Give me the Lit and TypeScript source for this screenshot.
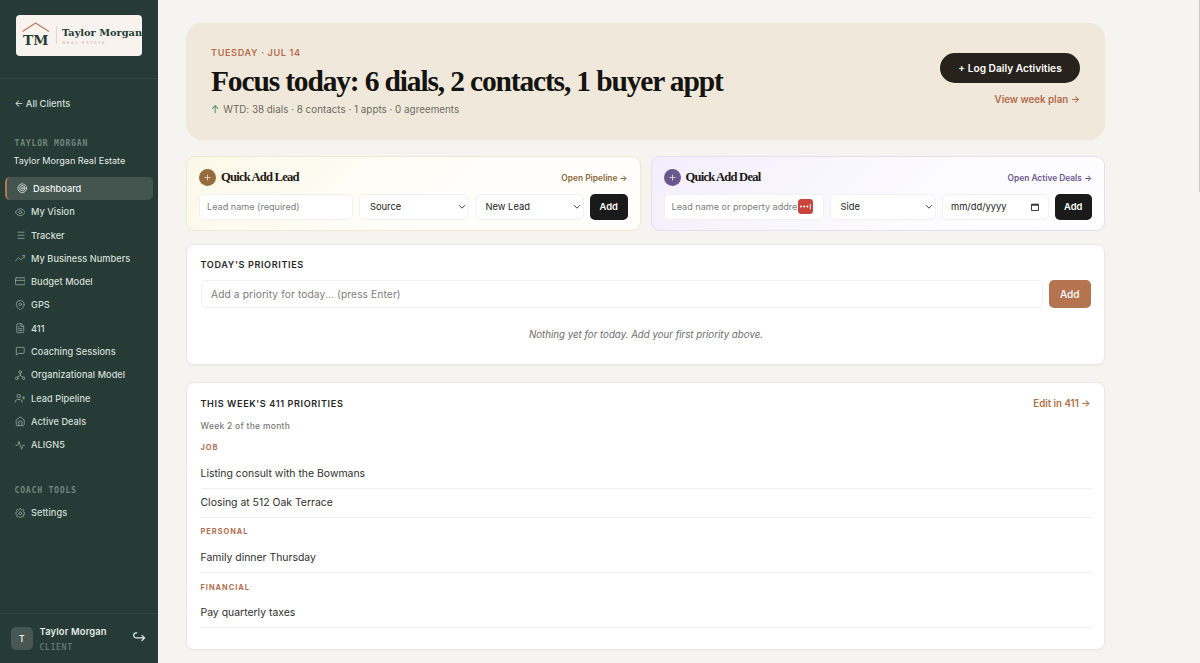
import { LitElement, html, css, svg } from "lit";
import { customElement, property } from "lit/decorators.js";

const icons: Record<string, unknown> = {
  target: svg`<circle cx="12" cy="12" r="10"/><circle cx="12" cy="12" r="6"/><circle cx="12" cy="12" r="2"/>`,
  eye: svg`<path d="M1 12s4-8 11-8 11 8 11 8-4 8-11 8S1 12 1 12z"/><circle cx="12" cy="12" r="3.4"/>`,
  list: svg`<path d="M7 5h14M7 12h14M7 19h14"/>`,
  trend: svg`<path d="M23 6l-9.5 9.5-5-5L1 18"/><path d="M17 6h6v6"/>`,
  card: svg`<rect x="1" y="4" width="22" height="16" rx="2"/><path d="M1 10h22"/>`,
  pin: svg`<path d="M21 10c0 7-9 13-9 13s-9-6-9-13a9 9 0 0 1 18 0z"/><circle cx="12" cy="10" r="3"/>`,
  file: svg`<path d="M14 2H6a2 2 0 0 0-2 2v16a2 2 0 0 0 2 2h12a2 2 0 0 0 2-2V8z"/><path d="M14 2v6h6M16 13H8M16 17H8M10 9H8"/>`,
  chat: svg`<path d="M21 15a2 2 0 0 1-2 2H7l-4 4V5a2 2 0 0 1 2-2h14a2 2 0 0 1 2 2z"/>`,
  org: svg`<circle cx="12" cy="4.500" r="3"/><circle cx="4" cy="19" r="3"/><circle cx="20" cy="19" r="3"/><path d="M12 7.500v5M12 12.500l-6.500 4M12 12.500l6.500 4"/>`,
  userplus: svg`<path d="M16 21v-2a4 4 0 0 0-4-4H5a4 4 0 0 0-4 4v2"/><circle cx="8.500" cy="7" r="4"/><path d="M20 8v6M23 11h-6"/>`,
  home: svg`<path d="M3 9l9-7 9 7v11a2 2 0 0 1-2 2H5a2 2 0 0 1-2-2z"/><path d="M8.500 22V12h7v10"/>`,
  pulse: svg`<path d="M22 12h-4l-3 9L9 3l-3 9H2"/>`,
  gear: svg`<circle cx="12" cy="12" r="3.200"/><path d="M19.400 15a1.650 1.650 0 0 0 .33 1.820l.06.06a2 2 0 1 1-2.830 2.830l-.06-.06a1.650 1.650 0 0 0-2.800 1.170V21a2 2 0 0 1-4 0v-.09a1.650 1.650 0 0 0-2.900-1.090l-.06.06a2 2 0 1 1-2.830-2.830l.06-.06A1.650 1.650 0 0 0 3.090 14H3a2 2 0 0 1 0-4h.09a1.650 1.650 0 0 0 1.100-2.900l-.06-.06a2 2 0 1 1 2.830-2.830l.06.06A1.650 1.650 0 0 0 10 3.090V3a2 2 0 0 1 4 0v.09a1.650 1.650 0 0 0 2.900 1.090l.06-.06a2 2 0 1 1 2.830 2.830l-.06.06A1.650 1.650 0 0 0 20.910 10H21a2 2 0 0 1 0 4h-.09a1.650 1.650 0 0 0-1.510 1z"/>`,
};

@customElement("line-icon")
class LineIcon extends LitElement {
  @property() name = "";
  static styles = css`
    :host { display: block; width: 10.500px; height: 10.500px; flex: none; }
    svg { display: block; width: 100%; height: 100%; fill: none; stroke: currentColor; stroke-width: 1.900; stroke-linecap: round; stroke-linejoin: round; }
  `;
  render() {
    return html`<svg viewBox="0 0 24 24">${icons[this.name]}</svg>`;
  }
}

@customElement("side-bar")
class SideBar extends LitElement {
  static styles = css`
    :host { display: flex; flex-direction: column; width: 158px; height: 663px; background: #263b35; color: #d3dfd8; font-family: Inter, sans-serif; flex: none; box-sizing: border-box; }
    .brand { height: 79px; box-sizing: border-box; padding: 15px 0 0 16px; border-bottom: 1px solid #34483f; flex: none; }
    .logo { display: block; width: 125.500px; height: 41px; border-radius: 4px; background: #f8f3ee; overflow: hidden; }
    .logo svg { display: block; width: 126px; height: 41px; }
    .back { padding: 17px 0 0 14.500px; font-size: 9.300px; line-height: 15px; font-weight: 500; }
    .label { font: 700 8.200px/12px "DejaVu Sans Mono", monospace; letter-spacing: .73px; color: #71857d; padding-left: 14.500px; white-space: nowrap; }
    .client { margin-top: 26px; }
    .company { padding: 5px 0 0 13.500px; font-size: 9.070px; line-height: 14px; white-space: nowrap; color: #e3ebe6; }
    .nav { display: flex; flex-direction: column; gap: .3px; margin-top: 9px; padding: 0 5px; }
    .item { display: flex; align-items: center; gap: 6px; height: 23px; padding-left: 9.500px; font-size: 9.200px; font-weight: 500; white-space: nowrap; letter-spacing: .04px; border-radius: 5px; width: 148px; box-sizing: border-box; }
    .item line-icon { color: #93a69e; }
    .item.active { background: #43544e; border-left: 2px solid #b07650; color: #eef3f0; }
    .item.active line-icon { color: #dce5e0; }
    .tools { margin-top: 27.500px; }
    .tools + .nav { margin-top: 5.500px; }
    .user { margin-top: auto; height: 50px; border-top: 1px solid #32463f; display: flex; align-items: center; padding-left: 10.500px; box-sizing: border-box; }
    .avatar { width: 22.500px; height: 22.500px; border-radius: 5px; background: #465851; display: grid; place-items: center; font-size: 8.500px; font-weight: 600; color: #e8efeb; }
    .who { margin-left: 6.500px; width: 93px; }
    .name { font-size: 9.350px; line-height: 14px; font-weight: 600; color: #e3ebe6; letter-spacing: .16px; }
    .role { font: 400 8.200px/12px "DejaVu Sans Mono", monospace; letter-spacing: .6px; color: #71857d; margin-top: 2px; }
    .out { width: 13px; height: 12px; margin-bottom: 3px; fill: none; stroke: #e3ebe6; stroke-width: 1.300; stroke-linecap: round; stroke-linejoin: round; }
  `;
  nav: [string, string][] = [
    ["target", "Dashboard"], ["eye", "My Vision"], ["list", "Tracker"], ["trend", "My Business Numbers"],
    ["card", "Budget Model"], ["pin", "GPS"], ["file", "411"], ["chat", "Coaching Sessions"],
    ["org", "Organizational Model"], ["userplus", "Lead Pipeline"], ["home", "Active Deals"], ["pulse", "ALIGN5"],
  ];
  render() {
    return html`
      <div class="brand">
        <div class="logo"><svg viewBox="0 0 126 41">
          <path d="M6.500 16.500L19.500 8L33 16.500" fill="none" stroke="#c07a5c" stroke-width="1.300"/>
          <text x="7" y="30" font-family="DejaVu Serif" font-weight="700" font-size="13.500" textLength="25.500" lengthAdjust="spacingAndGlyphs" fill="#263b35">TM</text>
          <path d="M40.500 11v18" stroke="#d9d0c8" stroke-width=".8"/>
          <text x="46" y="21" font-family="DejaVu Serif" font-weight="700" font-size="10" textLength="80" lengthAdjust="spacingAndGlyphs" fill="#263b35">Taylor Morgan</text>
          <text x="46.500" y="28.700" font-family="DejaVu Sans" font-size="3.900" textLength="42" fill="#cfa594">REAL ESTATE</text>
        </svg></div>
      </div>
      <div class="back">← All Clients</div>
      <div class="label client">TAYLOR MORGAN</div>
      <div class="company">Taylor Morgan Real Estate</div>
      <div class="nav">
        ${this.nav.map(([i, t], n) => html`<div class="item ${n === 0 ? "active" : ""}"><line-icon name=${i}></line-icon>${t}</div>`)}
      </div>
      <div class="label tools">COACH TOOLS</div>
      <div class="nav"><div class="item"><line-icon name="gear"></line-icon>Settings</div></div>
      <div class="user">
        <div class="avatar">T</div>
        <div class="who"><div class="name">Taylor Morgan</div><div class="role">CLIENT</div></div>
        <svg class="out" viewBox="0 0 14 12"><path d="M4 1.500H3.500a2.700 2.700 0 0 0 0 5.500H12.500M9.700 4.200L12.500 7L9.700 9.800"/></svg>
      </div>`;
  }
}

@customElement("app-root")
class AppRoot extends LitElement {
  static styles = css`
    :host { display: flex; position: relative; width: 1200px; height: 663px; overflow: hidden; background: #f5f4f0; font-family: Inter, sans-serif; color: #2e2e2e; }
    * { box-sizing: border-box; }
    .main { width: 919px; margin-left: 28px; padding-top: 22.500px; white-space: nowrap; }
    .hero { height: 117px; border-radius: 16px; background: #f0e9db; padding: 22px 25px 0; display: flex; justify-content: space-between; }
    .eyebrow { font-size: 9.100px; line-height: 14px; font-weight: 600; letter-spacing: .64px; color: #b9694e; padding-top: 1px; }
    .title { margin: 2.500px 0 0; font: 700 29.500px/38px "Liberation Serif", serif; letter-spacing: -1.160px; color: #14130f; }
    .wtd { margin-top: 2px; font-size: 9.800px; line-height: 15px; color: #6d6a61; letter-spacing: .02px; }
    .up { color: #3e7a58; margin-right: 4px; }
    .side { display: flex; flex-direction: column; align-items: flex-end; padding-top: 8.500px; }
    .pill { width: 140px; height: 30px; border-radius: 15px; border: 0; background: #28221c; color: #fff; font: 600 10.200px Inter, sans-serif; padding: 0 0 1px; }
    .plan { margin-top: 8.500px; font-size: 9.750px; line-height: 15px; font-weight: 600; color: #b5694b; }
    .quick { display: grid; grid-template-columns: minmax(0, 1fr) minmax(0, 1fr); gap: 10px; margin-top: 16.500px; }
    .qa { height: 75px; border: 1px solid #f0e9d2; border-radius: 9px; padding: 12px 12px 0; background: linear-gradient(135deg, #fcf8e8, #fffefb 60%, #fffefa); }
    .qa.deal { border-color: #e3dfef; background: linear-gradient(135deg, #f2eefc, #fcfbff 60%, #fefdff); }
    .qhead { display: flex; align-items: center; height: 17px; }
    .plus { width: 17px; height: 17px; border-radius: 50%; background: #966c3c; display: grid; place-items: center; }
    .plus svg { width: 7px; height: 7px; stroke: #f0e6d8; stroke-width: .8; }
    .deal .plus { background: #68588f; }
    .qtitle { font: 700 12.600px/17px "Liberation Serif", serif; letter-spacing: -.8px; margin-left: 5px; color: #1c1915; }
    .open { margin-left: auto; font-size: 8.400px; font-weight: 600; color: #8a6a3e; }
    .deal .open { color: #68588f; }
    .row { display: flex; gap: 6px; margin-top: 7.500px; }
    .field { height: 26px; border: 1px solid #f2f1ee; border-radius: 5px; background: #fff; font: 400 9.350px Inter, sans-serif; color: #222; padding: 0 7px; display: flex; align-items: center; min-width: 0; outline: 0; margin: 0; flex: none; }
    input.field { font-size: 9.100px; }
    .field::placeholder { color: #7d7d7d; opacity: 1; }
    .sel { justify-content: space-between; padding: 0 2px 0 10px; }
    .sel svg { width: 8px; height: 6px; fill: none; stroke: #333; stroke-width: .95; }
    .sel.date { padding: 0 9px 0 8px; }
    .sel .cal { width: 8px; height: 8px; }
    .wrap { position: relative; display: flex; }
    .badge { position: absolute; left: 134.500px; top: 5.500px; width: 15px; height: 15px; border-radius: 3px; }
    .add { height: 26px; width: 37.500px; border: 0; border-radius: 5px; background: #1a1a1a; color: #fff; font: 600 9.350px Inter, sans-serif; padding: 0; flex: none; }
    .w1 { width: 154px; } .w2 { width: 109.500px; } .w3 { width: 160px; } .w4 { width: 106.500px; }
    .card { background: #fff; border: 1px solid #eae9e5; border-radius: 8px; box-shadow: 0 1px 2px rgba(40, 40, 30, .04); padding: 13px 12.500px 0 13.500px; }
    .today { margin-top: 12.500px; height: 121.500px; }
    .week { margin-top: 16.500px; height: 268px; padding-top: 14px; }
    .h { font-size: 9.100px; line-height: 14px; font-weight: 600; letter-spacing: .62px; color: #262626; }
    .prow { display: flex; gap: 6px; margin-top: 8.500px; padding-right: 1px; }
    input.pinput { flex: 1; height: 28px; font-size: 10.200px; padding: 0 9.500px; letter-spacing: .12px; }
    .padd { width: 41.500px; height: 28px; border: 0; border-radius: 5px; background: #b3744f; color: #fff; font: 500 10.200px Inter, sans-serif; padding: 0; }
    .empty { text-align: center; margin-top: 19px; font-size: 9.700px; line-height: 15px; font-style: italic; color: #6b6b6b; }
    .whead { display: flex; justify-content: space-between; padding-right: 1px; }
    .edit { font-size: 9.700px; line-height: 14px; font-weight: 600; color: #b07048; }
    .sub { margin-top: 9.700px; font-size: 8.500px; line-height: 13px; font-weight: 500; color: #777; letter-spacing: .28px; }
    .cat { margin-top: 8.700px; font-size: 7.400px; line-height: 11px; font-weight: 700; letter-spacing: 1px; color: #b07050; }
    .task { height: 29px; line-height: 28px; font-size: 10.430px; color: #303030; border-bottom: 1px solid #efefed; }
    .first { margin-top: 6.700px; }
    .thumb { position: absolute; right: 0; top: 0; width: 1px; height: 192px; background: #c9c9c6; }
  `;
  chevron = html`<svg viewBox="0 0 8 6"><path d="M1 1.200L4 4.200L7 1.200"/></svg>`;
  plus = html`<span class="plus"><svg viewBox="0 0 7 7"><path d="M3.500 .5v6M.5 3.500h6"/></svg></span>`;
  group(name: string, tasks: string[]) {
    return html`<div class="cat">${name}</div>${tasks.map((t, i) => html`<div class="task ${i ? "" : "first"}">${t}</div>`)}`;
  }
  render() {
    return html`
      <side-bar></side-bar>
      <div class="main">
        <div class="hero">
          <div>
            <div class="eyebrow">TUESDAY · JUL 14</div>
            <h1 class="title">Focus today: 6 dials, 2 contacts, 1 buyer appt</h1>
            <div class="wtd"><span class="up">↑</span>WTD: 38 dials · 8 contacts · 1 appts · 0 agreements</div>
          </div>
          <div class="side"><button class="pill">+ Log Daily Activities</button><div class="plan">View week plan →</div></div>
        </div>
        <div class="quick">
          <div class="qa">
            <div class="qhead">${this.plus}<span class="qtitle">Quick Add Lead</span><span class="open">Open Pipeline →</span></div>
            <div class="row">
              <input class="field w1" placeholder="Lead name (required)">
              <div class="field sel w2">Source${this.chevron}</div>
              <div class="field sel w2">New Lead${this.chevron}</div>
              <button class="add">Add</button>
            </div>
          </div>
          <div class="qa deal">
            <div class="qhead">${this.plus}<span class="qtitle">Quick Add Deal</span><span class="open">Open Active Deals →</span></div>
            <div class="row">
              <div class="wrap">
                <input class="field w3" placeholder="Lead name or property addre">
                <svg class="badge" viewBox="0 0 15 15"><rect width="15" height="15" rx="2.500" fill="#c9443c"/><g fill="#fff"><circle cx="3" cy="7.500" r="1"/><circle cx="6.200" cy="7.500" r="1"/><circle cx="9.400" cy="7.500" r="1"/><rect x="11.800" y="4.800" width=".9" height="5.400"/></g></svg>
              </div>
              <div class="field sel w4">Side${this.chevron}</div>
              <div class="field sel date w4">mm/dd/yyyy<svg class="cal" viewBox="0 0 8 8"><path d="M.5 1.300h7v6.200h-7z"/><path d="M.5 1.800h7" stroke-width="1.800"/></svg></div>
              <button class="add">Add</button>
            </div>
          </div>
        </div>
        <div class="card today">
          <div class="h">TODAY'S PRIORITIES</div>
          <div class="prow"><input class="field pinput" placeholder="Add a priority for today... (press Enter)"><button class="padd">Add</button></div>
          <div class="empty">Nothing yet for today. Add your first priority above.</div>
        </div>
        <div class="card week">
          <div class="whead"><div class="h">THIS WEEK'S 411 PRIORITIES</div><div class="edit">Edit in 411 →</div></div>
          <div class="sub">Week 2 of the month</div>
          ${this.group("JOB", ["Listing consult with the Bowmans", "Closing at 512 Oak Terrace"])}
          ${this.group("PERSONAL", ["Family dinner Thursday"])}
          ${this.group("FINANCIAL", ["Pay quarterly taxes"])}
        </div>
      </div>
      <div class="thumb"></div>`;
  }
}
